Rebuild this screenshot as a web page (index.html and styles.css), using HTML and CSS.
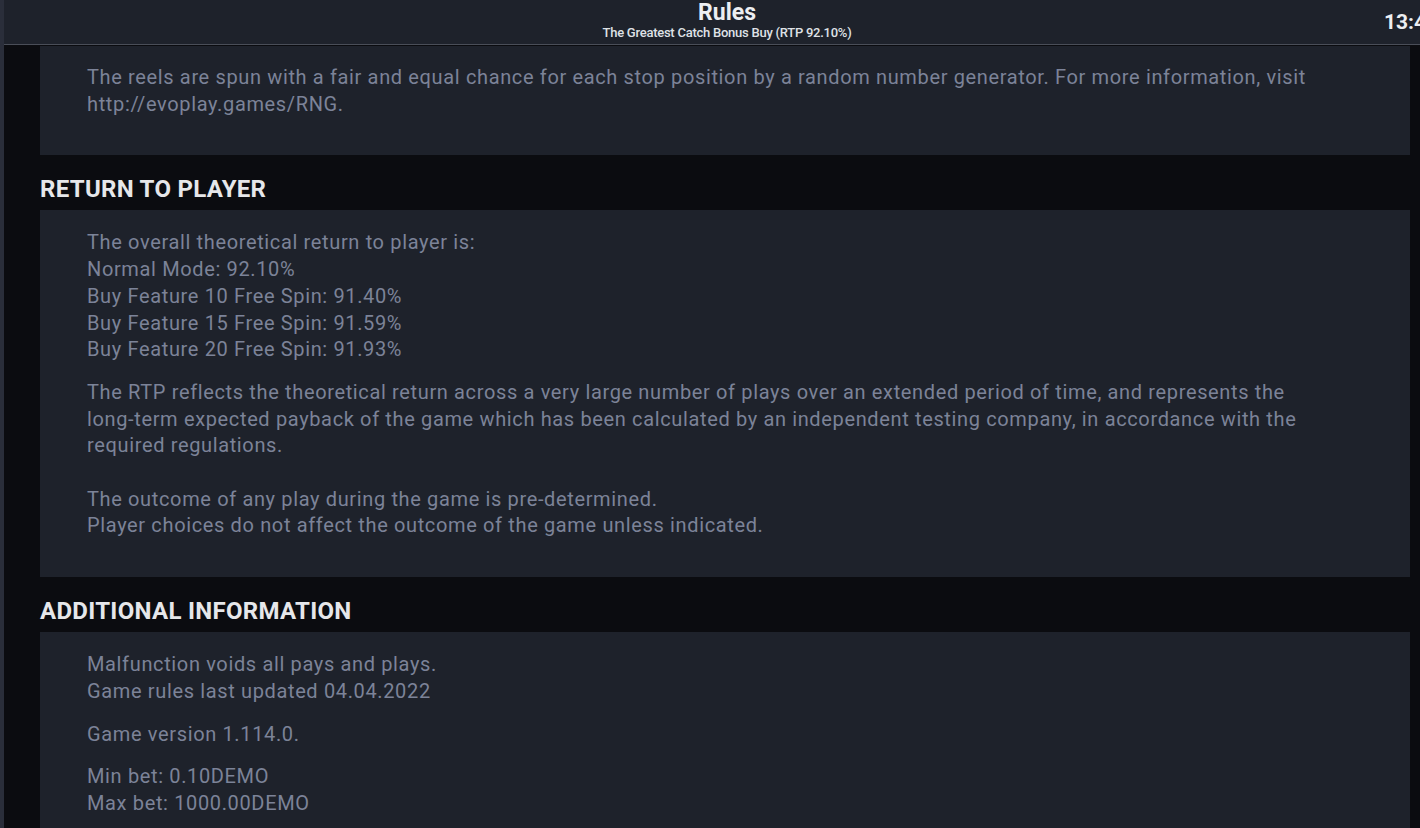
FILE: index.html
```html
<!DOCTYPE html>
<html>
<head>
<meta charset="utf-8">
<link rel="stylesheet" href="styles.css">
</head>
<body>
<div class="app">
  <div class="edge"></div>
  <div class="main">
    <header class="topbar">
      <div class="title">
        <div class="title-main">Rules</div>
        <div class="title-sub">The Greatest Catch Bonus Buy (RTP 92.10%)</div>
      </div>
      <div class="clock">13:47</div>
    </header>
    <div class="content">
      <section class="card card-first">
        <p>The reels are spun with a fair and equal chance for each stop position by a random number generator. For more information, visit http://evoplay.games/RNG.</p>
      </section>
      <h2 class="heading">RETURN TO PLAYER</h2>
      <section class="card">
        <p>The overall theoretical return to player is:<br>Normal Mode: 92.10%<br>Buy Feature 10 Free Spin: 91.40%<br>Buy Feature 15 Free Spin: 91.59%<br>Buy Feature 20 Free Spin: 91.93%</p>
        <p>The RTP reflects the theoretical return across a very large number of plays over an extended period of time, and represents the <span class="nowrap">long-term</span> expected payback of the game which has been calculated by an independent testing company, in accordance with the required regulations.<br><br>The outcome of any play during the game is pre-determined.<br>Player choices do not affect the outcome of the game unless indicated.</p>
      </section>
      <h2 class="heading">ADDITIONAL INFORMATION</h2>
      <section class="card">
        <p>Malfunction voids all pays and plays.<br>Game rules last updated 04.04.2022</p>
        <p>Game version 1.114.0.</p>
        <p>Min bet: 0.10DEMO<br>Max bet: 1000.00DEMO</p>
      </section>
    </div>
  </div>
</div>
</body>
</html>
```

FILE: styles.css
```css
html, body {
  margin: 0;
  padding: 0;
  height: 100%;
  overflow: hidden;
  background: #0b0c10;
}
body {
  font-family: Roboto, "Liberation Sans", sans-serif;
}
.app {
  display: flex;
  height: 828px;
  width: 1420px;
  overflow: hidden;
}
.edge {
  width: 4px;
  flex: none;
  background: #2a2e3a;
}
.main {
  flex: 1;
  min-width: 0;
  display: flex;
  flex-direction: column;
}
.topbar {
  flex: none;
  height: 45px;
  width: 1446px;
  box-sizing: border-box;
  background: #1e222b;
  border-bottom: 1px solid #4a4e58;
  display: flex;
  align-items: flex-start;
  justify-content: center;
  position: relative;
}
.title {
  text-align: center;
  color: #eceef2;
}
.title-main {
  font-size: 23px;
  font-weight: 700;
  line-height: 25px;
}
.title-sub {
  font-size: 13px;
  font-weight: 500;
  line-height: 15px;
  color: #dfe1e6;
  letter-spacing: -0.25px;
}
.clock {
  position: absolute;
  left: 1380px;
  top: 10px;
  font-size: 21px;
  font-weight: 700;
  color: #eceef2;
}
.content {
  flex: 1;
  padding: 1px 10px 0 36px;
}
.card {
  background: #1e222b;
  padding: 19px 47px 22px 47px;
  color: #7c8398;
  font-size: 20px;
  letter-spacing: 0.64px;
  line-height: 26.7px;
}
.card-first {
  padding-top: 18px;
}
.card p {
  margin: 0 0 16px 0;
}
.nowrap {
  white-space: nowrap;
}
.heading {
  margin: 0;
  height: 55px;
  box-sizing: border-box;
  padding-top: 21px;
  font-size: 24px;
  letter-spacing: 0.3px;
  line-height: 26px;
  font-weight: 700;
  color: #e6e7ea;
}
```
